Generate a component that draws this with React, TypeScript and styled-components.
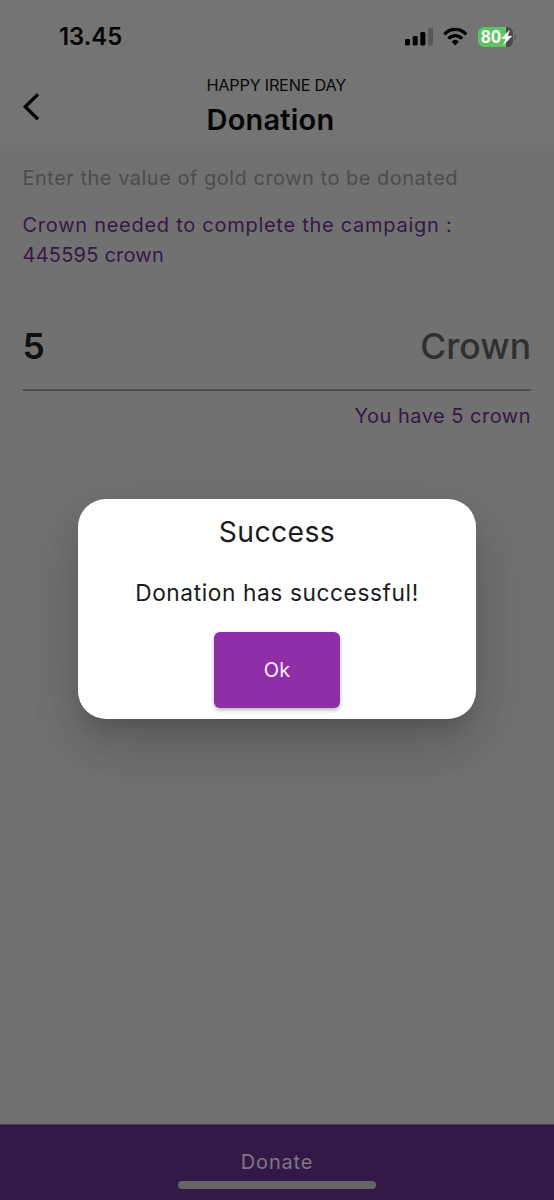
import React from "react";
import styled, { createGlobalStyle } from "styled-components";

const GlobalStyle = createGlobalStyle`
  *, *::before, *::after { box-sizing: border-box; }
  body { margin: 0; background: #717171; font-family: Inter, "Liberation Sans", sans-serif; }
`;

type TextProps = { $size: number; $line: number; $color: string; $weight?: number; $spacing?: number };

const Text = styled.div<TextProps>`
  font-size: ${(p) => p.$size}px;
  line-height: ${(p) => p.$line}px;
  color: ${(p) => p.$color};
  font-weight: ${(p) => p.$weight ?? 400};
  letter-spacing: ${(p) => p.$spacing ?? 0}px;
  white-space: nowrap;
`;

const Screen = styled.div`
  position: relative;
  width: 554px;
  height: 1200px;
  display: flex;
  flex-direction: column;
  background: #717171;
  overflow: hidden;
`;

const TopArea = styled.div`
  height: 145px;
  background: #747474;
`;

const StatusBar = styled.div`
  height: 74px;
  display: flex;
  align-items: center;
  justify-content: space-between;
  padding: 0 38px 0 59px;
`;

const StatusIcons = styled.div`
  display: flex;
  align-items: center;
`;

const Header = styled.header`
  height: 71px;
  display: flex;
`;

const BackButton = styled.button`
  width: 206.5px;
  padding: 18px 0 0 22px;
  border: 0;
  background: none;
  display: flex;
  align-items: flex-start;
`;

const Content = styled.main`
  flex: 1;
  display: flex;
  flex-direction: column;
  padding: 18px 23px 0 22.5px;
`;

const Needed = styled.div`
  margin-top: 17px;
`;

const AmountRow = styled.div`
  height: 85px;
  margin-top: 36px;
  padding-bottom: 1px;
  display: flex;
  align-items: center;
  justify-content: space-between;
  border-bottom: 2px solid #4d4d4d;
`;

const Balance = styled.div`
  display: flex;
  justify-content: flex-end;
  margin-top: 10px;
`;

const Footer = styled.footer`
  height: 76px;
  display: flex;
  flex-direction: column;
  align-items: center;
  padding-top: 23px;
  background: #331947;
  border-top: 1px solid #4a3859;
`;

const HomeIndicator = styled.div`
  width: 198px;
  height: 8px;
  margin-top: 5px;
  border-radius: 4px;
  background: #666464;
`;

const Layer = styled.div`
  position: absolute;
  inset: 0;
  display: flex;
  align-items: center;
  justify-content: center;
  padding-top: 18px;
`;

const Dialog = styled.section`
  width: 398px;
  height: 220px;
  display: flex;
  flex-direction: column;
  align-items: center;
  padding-top: 13px;
  border-radius: 28px;
  background: #fff;
  box-shadow: 0 15px 21px -10px rgba(0, 0, 0, 0.16), 0 33px 50px 2px rgba(0, 0, 0, 0.11),
    0 12px 56px 4px rgba(0, 0, 0, 0.07);
`;

const Message = styled.div`
  margin-top: 24px;
`;

const OkButton = styled.button`
  width: 126px;
  height: 76px;
  margin-top: 22px;
  padding: 0 0 1px;
  display: flex;
  align-items: center;
  justify-content: center;
  border: 0;
  border-radius: 6px;
  background: #8e2fa8;
  font-family: inherit;
  box-shadow: 0 2px 4px rgba(0, 0, 0, 0.3);
`;

function StatusGlyphs() {
  return (
    <svg width="112" height="24" viewBox="404 25 112 24" fill="#000">
      <rect x="405" y="39" width="5" height="6.5" rx="1.4" />
      <rect x="412.7" y="36" width="5" height="9.5" rx="1.4" />
      <rect x="420.3" y="32" width="5" height="13.5" rx="1.4" />
      <rect x="428" y="28" width="5" height="17.5" rx="1.4" fill="#585858" />
      <g fill="none" stroke="#000" strokeWidth="3.3">
        <path d="M444.4 34.4C450.5 27.8 460 27.8 466.1 34.4" />
        <path d="M448.4 38.7C452.3 34.7 458.2 34.7 462.1 38.7" />
      </g>
      <path d="M451.6 41.4Q455.25 38.2 458.9 41.4L455.25 45.6Z" />
      <path d="M484 27H506V47H484A6 6 0 0 1 478 41V33A6 6 0 0 1 484 27Z" fill="#5fc462" />
      <path d="M506 27H507A6 6 0 0 1 513 33V41A6 6 0 0 1 507 47H506Z" fill="#4c494c" />
      <path d="M514.3 34Q516.2 35 516.2 37Q516.2 39 514.3 40Z" fill="#5b5b5b" />
      <text x="480.7" y="43.4" fontSize="17.5" fontWeight="700" textLength="20.5" lengthAdjust="spacingAndGlyphs" fill="#fff">80</text>
      <path d="M509.3 30.5L501.8 38.4H506L503.8 44.6L511.6 36.2H507.4Z" fill="#fff" stroke="#fff" strokeWidth="0.6" />
    </svg>
  );
}

export default function App() {
  return (
    <Screen>
      <GlobalStyle />
      <TopArea>
        <StatusBar>
          <Text $size={23.8} $line={28} $color="#050505" $weight={600}>13.45</Text>
          <StatusIcons><StatusGlyphs /></StatusIcons>
        </StatusBar>
        <Header>
          <BackButton aria-label="Back">
            <svg width="18" height="30" viewBox="0 0 18 30" fill="none" stroke="#050505" strokeWidth="3.3">
              <path d="M16 2.3L3.2 14.8L16 27.3" />
            </svg>
          </BackButton>
          <div>
            <Text $size={16.3} $line={22} $color="#0a0a0a" $spacing={-0.25}>HAPPY IRENE DAY</Text>
            <Text $size={29} $line={48} $color="#050505" $weight={600} $spacing={0.2}>Donation</Text>
          </div>
        </Header>
      </TopArea>
      <Content>
        <Text $size={20} $line={30} $color="#4c4c4c" $spacing={0.5}>Enter the value of gold crown to be donated</Text>
        <Needed>
          <Text $size={20} $line={30} $color="#331947" $spacing={0.73}>Crown needed to complete the campaign :</Text>
          <Text $size={20} $line={30} $color="#331947" $spacing={0.22}>445595 crown</Text>
        </Needed>
        <AmountRow>
          <Text $size={35.5} $line={50} $color="#101010" $weight={600} $spacing={-1}>5</Text>
          <Text $size={35.5} $line={50} $color="#303030" $weight={500}>Crown</Text>
        </AmountRow>
        <Balance>
          <Text $size={20} $line={30} $color="#331947" $spacing={0.5}>You have 5 crown</Text>
        </Balance>
      </Content>
      <Footer>
        <Text $size={20} $line={28} $color="#807585" $spacing={0.8}>Donate</Text>
        <HomeIndicator />
      </Footer>
      <Layer>
        <Dialog role="dialog">
          <Text $size={28.3} $line={40} $color="#1b1b1d" $spacing={0.4}>Success</Text>
          <Message>
            <Text $size={22.7} $line={34} $color="#1b1b1d" $spacing={0.6}>Donation has successful!</Text>
          </Message>
          <OkButton>
            <Text $size={20} $line={28} $color="#fdf0ff">Ok</Text>
          </OkButton>
        </Dialog>
      </Layer>
    </Screen>
  );
}
